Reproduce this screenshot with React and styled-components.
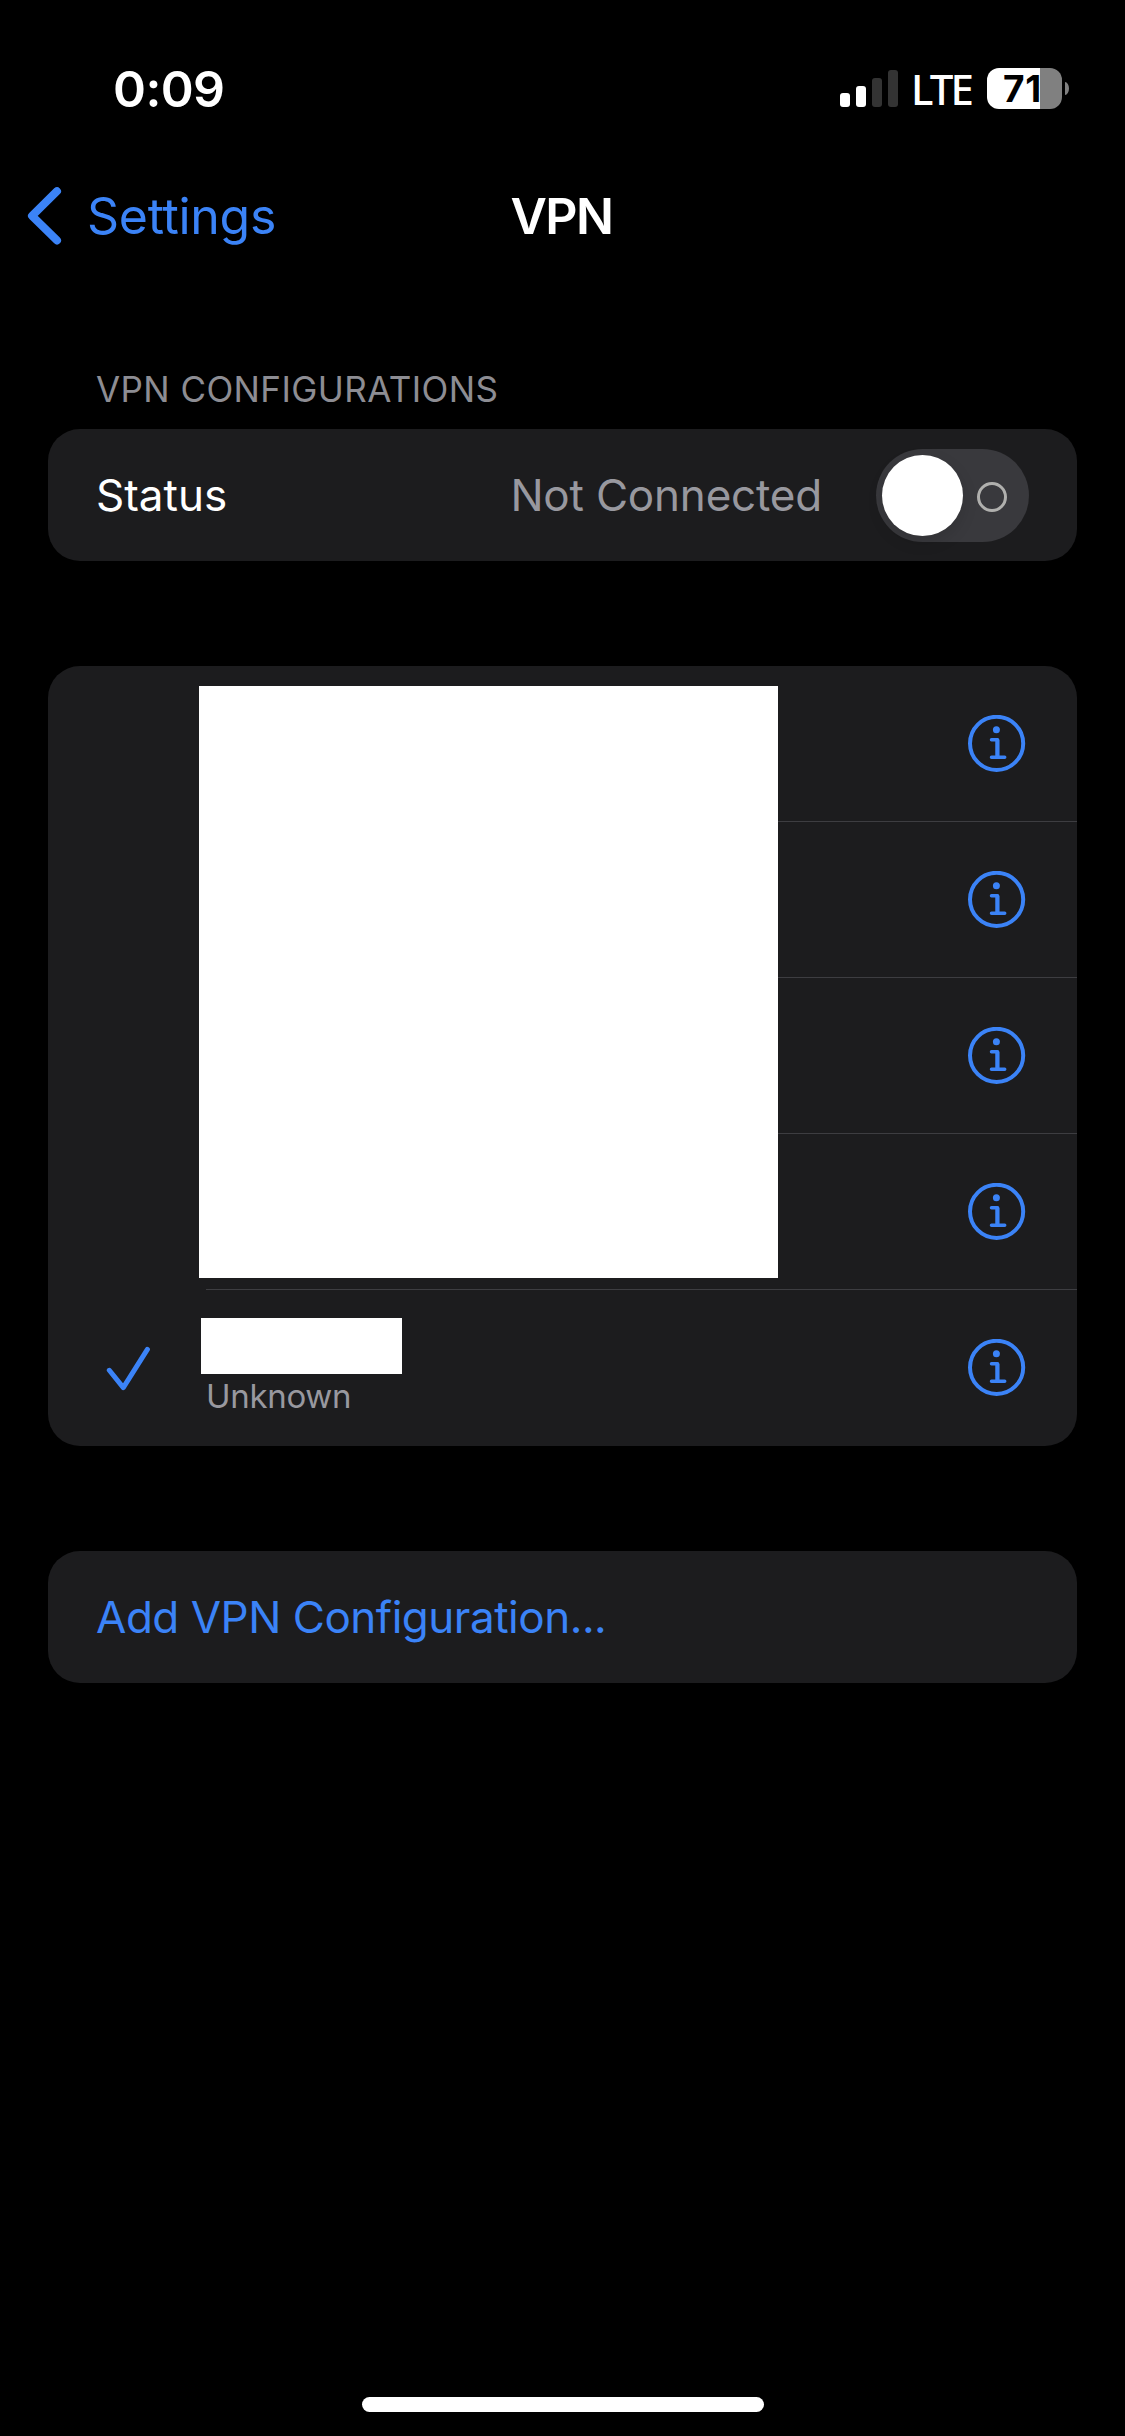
import React from "react";
import styled, { createGlobalStyle } from "styled-components";

const blue = "#3b83f7";

const GlobalStyle = createGlobalStyle`
  body {
    margin: 0;
    background: #000;
  }
  * {
    box-sizing: border-box;
  }
`;

const Screen = styled.div`
  display: flex;
  flex-direction: column;
  width: 1125px;
  height: 2436px;
  background: #000;
  color: #fff;
  font-family: Inter, "Liberation Sans", sans-serif;
  white-space: nowrap;
  overflow: hidden;
`;

const StatusBar = styled.header`
  display: flex;
  justify-content: space-between;
  align-items: center;
  height: 144px;
  padding: 34px 56px 0 113px;
`;

const Time = styled.time`
  font-size: 50px;
  font-weight: 600;
  line-height: 60px;
  letter-spacing: -0.6px;
`;

const Indicators = styled.div`
  display: flex;
  align-items: flex-start;
  height: 42px;
`;

const Signal = styled.div`
  display: flex;
  align-items: flex-end;
  gap: 6px;
  height: 37px;
  margin: 2px 13px 0 0;
`;

const Bar = styled.span`
  width: 10px;
  height: ${(p) => p.$height}px;
  border-radius: 3px;
  background: ${(p) => (p.$on ? "#fff" : "#333")};
`;

const Network = styled.span`
  width: 76px;
  font-family: "Noto Sans", "Open Sans", sans-serif;
  font-size: 42px;
  font-weight: 500;
  line-height: 41px;
  letter-spacing: -2.8px;
`;

const Battery = styled.div`
  display: flex;
  align-items: center;
  justify-content: flex-start;
  width: 75px;
  height: 41px;
  padding-left: 16px;
  border-radius: 12px;
  background: linear-gradient(90deg, #fff 53px, #808080 53px);
  color: #000;
  font-size: 37px;
  font-weight: 700;
  line-height: 41px;
  letter-spacing: 0.8px;
`;

const BatteryCap = styled.span`
  width: 4px;
  height: 13px;
  margin: 14px 0 0 3px;
  border-radius: 0 4px 4px 0 / 0 6.5px 6.5px 0;
  background: #808080;
`;

const NavBar = styled.nav`
  display: grid;
  grid-template-columns: 1fr auto 1fr;
  align-items: center;
  height: 144px;
  padding: 0 28px 0 27px;
`;

const BackLink = styled.a`
  display: flex;
  align-items: center;
  gap: 24px;
  color: ${blue};
  font-size: 50px;
  line-height: 60px;
  letter-spacing: -0.3px;
`;

const Title = styled.h1`
  margin: 0;
  padding-right: 1px;
  font-size: 50px;
  font-weight: 600;
  line-height: 60px;
  letter-spacing: -1.5px;
`;

const Content = styled.main`
  display: flex;
  flex-direction: column;
  flex: 1;
  padding: 79px 48px 0;
`;

const SectionLabel = styled.h2`
  margin: 0 0 18px;
  padding-left: 48px;
  color: #8d8d93;
  font-size: 35px;
  font-weight: 400;
  line-height: 44px;
  letter-spacing: 0.42px;
`;

const Card = styled.section`
  position: relative;
  margin-bottom: ${(p) => p.$gap || 0}px;
  border-radius: 32px;
  background: #1c1c1e;
  overflow: hidden;
`;

const SettingRow = styled.div`
  display: flex;
  align-items: center;
  height: 132px;
  padding: 0 48px;
  color: ${(p) => (p.$link ? blue : "#fff")};
  font-size: 44px;
  letter-spacing: ${(p) => p.$tracking || 0}px;
`;

const Value = styled.span`
  margin-left: auto;
  margin-right: 54px;
  color: #98989f;
  letter-spacing: -0.2px;
`;

const Toggle = styled.button`
  display: flex;
  align-items: center;
  width: 153px;
  height: 93px;
  padding: 0 22px 0 6px;
  border: 0;
  border-radius: 47px;
  background: #39393d;
`;

const Knob = styled.span`
  width: 81px;
  height: 81px;
  border-radius: 50%;
  background: #fff;
  box-shadow: 0 6px 16px rgba(0, 0, 0, 0.12);
`;

const OffMark = styled.span`
  width: 30px;
  height: 30px;
  margin: 4px 0 0 14px;
  border: 3px solid #b0b0ae;
  border-radius: 50%;
`;

const ConfigRow = styled.div`
  display: grid;
  grid-template-columns: 158px 1fr;
  height: 156px;
`;

const CheckCell = styled.div`
  display: flex;
  align-items: center;
  padding: 2px 0 0 57px;
`;

const ConfigBody = styled.div`
  display: flex;
  align-items: center;
  justify-content: space-between;
  padding-right: 51px;
  border-bottom: ${(p) => (p.$last ? "0" : "1px solid #3d3d41")};
`;

const ConfigText = styled.div`
  display: flex;
  flex-direction: column;
  align-self: flex-start;
  padding-top: 28px;
`;

const NameMask = styled.span`
  width: 201px;
  height: 56px;
  margin-left: -5px;
  background: #fff;
`;

const Subtitle = styled.span`
  padding-top: 2px;
  color: #98989f;
  font-size: 33px;
  line-height: 40px;
  letter-spacing: -0.3px;
`;

const ListMask = styled.div`
  position: absolute;
  top: 20px;
  left: 151px;
  width: 579px;
  height: 592px;
  background: #fff;
`;

const HomeArea = styled.footer`
  display: flex;
  justify-content: center;
  height: 39px;
  padding-left: 1px;
`;

const HomeIndicator = styled.span`
  width: 402px;
  height: 15px;
  border-radius: 8px;
  background: #fff;
`;

const Chevron = () => (
  <svg width="36" height="60" viewBox="0 0 36 60" fill="none">
    <path d="M30 5.2 5 29.8 30 54.4" stroke={blue} strokeWidth="8" strokeLinecap="round" strokeLinejoin="round" />
  </svg>
);

const Check = () => (
  <svg width="46" height="46" viewBox="0 0 46 46" fill="none">
    <path d="M4.3 24.3 18.3 41.6 42.4 3.4" stroke={blue} strokeWidth="5" strokeLinecap="round" strokeLinejoin="round" />
  </svg>
);

const Info = () => (
  <svg width="58" height="58" viewBox="0 0 58 58" fill="none" stroke={blue}>
    <circle cx="28.6" cy="28.4" r="26.6" strokeWidth="4" />
    <circle cx="28.4" cy="14.8" r="3.5" fill={blue} stroke="none" />
    <path d="M23.5 24.7h6.1v17.6M23.5 42.3h13.2" strokeWidth="3.5" strokeLinecap="round" strokeLinejoin="round" />
    <path d="M29.3 25v16.8" strokeWidth="4" />
  </svg>
);

const bars = [14, 21, 29, 37];
const configs = [{}, {}, {}, {}, { selected: true, kind: "Unknown" }];

export default function App() {
  return (
    <Screen>
      <GlobalStyle />
      <StatusBar>
        <Time>0:09</Time>
        <Indicators>
          <Signal>
            {bars.map((height, i) => (
              <Bar key={height} $height={height} $on={i < 2} />
            ))}
          </Signal>
          <Network>LTE</Network>
          <Battery>71</Battery>
          <BatteryCap />
        </Indicators>
      </StatusBar>
      <NavBar>
        <BackLink>
          <Chevron />
          Settings
        </BackLink>
        <Title>VPN</Title>
      </NavBar>
      <Content>
        <SectionLabel>VPN CONFIGURATIONS</SectionLabel>
        <Card $gap={105}>
          <SettingRow>
            <span>Status</span>
            <Value>Not Connected</Value>
            <Toggle aria-label="Status">
              <Knob />
              <OffMark />
            </Toggle>
          </SettingRow>
        </Card>
        <Card $gap={105}>
          {configs.map((config, i) => (
            <ConfigRow key={i}>
              <CheckCell>{config.selected && <Check />}</CheckCell>
              <ConfigBody $last={i === configs.length - 1}>
                <ConfigText>
                  {config.selected && <NameMask />}
                  {config.kind && <Subtitle>{config.kind}</Subtitle>}
                </ConfigText>
                <Info />
              </ConfigBody>
            </ConfigRow>
          ))}
          <ListMask />
        </Card>
        <Card>
          <SettingRow $link $tracking={-0.48}>
            Add VPN Configuration...
          </SettingRow>
        </Card>
      </Content>
      <HomeArea>
        <HomeIndicator />
      </HomeArea>
    </Screen>
  );
}
